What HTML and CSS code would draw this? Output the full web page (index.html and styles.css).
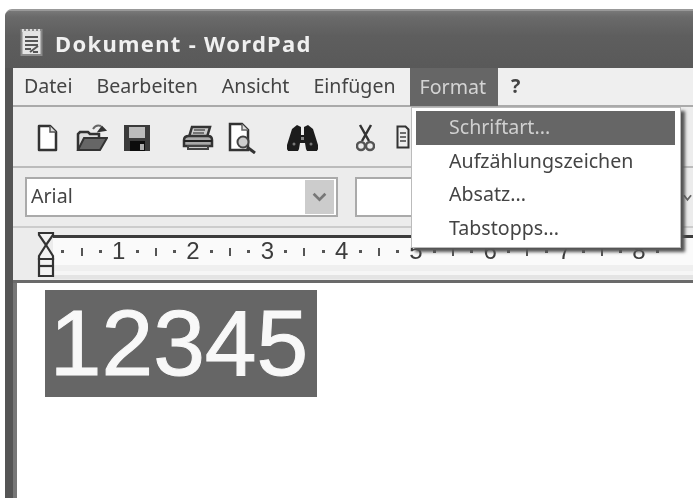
FILE: index.html
```html
<!DOCTYPE html>
<html lang="de">
<head>
<meta charset="utf-8">
<title>Dokument - WordPad</title>
<link rel="stylesheet" href="styles.css">
</head>
<body>
<div class="window">
  <header class="titlebar">
    <svg class="appicon" viewBox="0 0 23 28"><rect x="1.500" y="2" width="20" height="25" fill="#e4e4e4" stroke="#8a8a8a" stroke-width="2"/><path d="M3 1v3M7 1v3M11 1v3M15 1v3M19 1v3" stroke="#ddd" stroke-width="2"/><path d="M5 9h13M5 13h13M5 17h13M5 21h6" stroke="#555" stroke-width="2"/><path d="M10 24l8-6M13 24h5" stroke="#555" stroke-width="2" fill="none"/></svg>
    <span class="apptitle">Dokument - WordPad</span>
  </header>
  <div class="client">
    <nav class="menubar">
      <span class="menu">Datei</span>
      <span class="menu">Bearbeiten</span>
      <span class="menu">Ansicht</span>
      <span class="menu">Einfügen</span>
      <span class="menu active">Format</span>
      <span class="menu help">?</span>
    </nav>
    <div class="toolbar">
      <svg class="ti new" viewBox="0 0 21 28"><path d="M2 2h11l6 6v18H2z" fill="#fff" stroke="#333" stroke-width="2.500" stroke-linejoin="round"/><path d="M13 2v6h6" fill="#ddd" stroke="#555" stroke-width="1.500"/></svg>
      <svg class="ti open" viewBox="0 0 32 29"><path d="M2 27V11l2-2h8l2 2h9v4" fill="#ddd" stroke="#333" stroke-width="2.500"/><path d="M2 27l6-12h23l-7 12z" fill="#666" stroke="#333" stroke-width="2"/><path d="M17 6q3-5 8-3" fill="none" stroke="#666" stroke-width="2"/><path d="M23 8l3-4 3 3z" fill="#333" stroke="#333" stroke-width="2"/></svg>
      <svg class="ti save" viewBox="0 0 28 28"><path d="M1 1h26v26H1z" fill="#3a3a3a"/><rect x="6" y="3" width="16" height="11" fill="#bbb"/><rect x="7" y="17" width="15" height="10" fill="#0c0c0c"/><rect x="17" y="20" width="4" height="6" fill="#aaa"/></svg>
      <svg class="ti print" viewBox="0 0 32 26"><path d="M10 2h18l-3 10H7z" fill="#ccc" stroke="#333" stroke-width="2.500"/><path d="M12 5h11M11 8h11" stroke="#555" stroke-width="1.500"/><path d="M2 15q0-4 5-4h19q4 0 4 4v6H2z" fill="#aaa" stroke="#333" stroke-width="2.500"/><path d="M2 16h28" stroke="#222" stroke-width="2"/><path d="M6 21h20v3H6z" fill="#ccc" stroke="#444" stroke-width="2"/></svg>
      <svg class="ti preview" viewBox="0 0 30 32"><path d="M2 2h12l6 6v20H2z" fill="#fff" stroke="#333" stroke-width="2.500"/><path d="M14 2v6h6" fill="#ddd" stroke="#666" stroke-width="1.500"/><circle cx="15" cy="20" r="5.500" fill="#ccc" stroke="#444" stroke-width="2"/><path d="M19 25l8 6" stroke="#333" stroke-width="3"/></svg>
      <svg class="ti find" viewBox="0 0 31 27"><path d="M5 5l5-4 4 2v8h3V3l4-2 5 4 5 16a6 6 0 0 1-12 4l-1-6h-5l-1 6a6 6 0 0 1-12-4z" fill="#1c1c1c"/><circle cx="7" cy="20" r="1.500" fill="#777"/><circle cx="24" cy="20" r="1.500" fill="#777"/><rect x="14" y="13" width="3" height="3" fill="#888"/></svg>
      <svg class="ti cut" viewBox="0 0 19 28"><path d="M4 1l9 16M15 1L6 17" stroke="#333" stroke-width="2.500" fill="none"/><circle cx="5" cy="22" r="4" fill="none" stroke="#555" stroke-width="2.500"/><circle cx="14" cy="22" r="4" fill="none" stroke="#555" stroke-width="2.500"/></svg>
      <svg class="ti copy" viewBox="0 0 14 26"><path d="M1.500 1.500h8l3 3v18h-11z" fill="#eee" stroke="#333" stroke-width="2"/><path d="M4 8h6M4 12h6M4 16h6" stroke="#444" stroke-width="1.500"/></svg>
    </div>
    <div class="formatbar">
      <div class="combo">
        <span class="combotext">Arial</span>
        <span class="dropbtn"><svg viewBox="0 0 14 9" class="chev"><path d="M1.500 1.500L7 7l5.500-5.500" fill="none" stroke="#777" stroke-width="2.500"/></svg></span>
      </div>
      <div class="combo small"></div>
      <svg class="far-chev" viewBox="0 0 10 10"><path d="M1 2l4 5 4-5" fill="none" stroke="#666" stroke-width="2"/></svg>
    </div>
    <div class="ruler">
      <svg class="marker" viewBox="0 0 18 47"><path d="M2 2h14v2L9 14 2 4z" fill="#f2f2f2" stroke="#333" stroke-width="2.200"/><path d="M9 14l7 11v3H2v-3z" fill="#f2f2f2" stroke="#333" stroke-width="2.200"/><path d="M2 28h14v17H2z" fill="#f2f2f2" stroke="#333" stroke-width="2.200"/><path d="M2 35h14" stroke="#333" stroke-width="2.200"/></svg>
      <div class="rulerbody">
        <div class="scale">
          <i class="dot"></i><i class="bar"></i><i class="dot"></i><span class="num">1</span>
          <i class="dot"></i><i class="bar"></i><i class="dot"></i><span class="num">2</span>
          <i class="dot"></i><i class="bar"></i><i class="dot"></i><span class="num">3</span>
          <i class="dot"></i><i class="bar"></i><i class="dot"></i><span class="num">4</span>
          <i class="dot"></i><i class="bar"></i><i class="dot"></i><span class="num">5</span>
          <i class="dot"></i><i class="bar"></i><i class="dot"></i><span class="num">6</span>
          <i class="dot"></i><i class="bar"></i><i class="dot"></i><span class="num">7</span>
          <i class="dot"></i><i class="bar"></i><i class="dot"></i><span class="num">8</span>
          <i class="dot"></i>
        </div>
        <div class="tabline"></div>
      </div>
    </div>
    <main class="doc">
      <span class="selection">12345</span>
    </main>
    <ul class="dropdown">
      <li class="item selected">Schriftart...</li>
      <li class="item">Aufzählungszeichen</li>
      <li class="item">Absatz...</li>
      <li class="item">Tabstopps...</li>
    </ul>
  </div>
</div>
</body>
</html>
```
FILE: styles.css
```css
* { box-sizing: border-box; }
html, body { margin: 0; height: 100%; background: #fff; overflow: hidden; }
body { font-family: "Noto Sans", "Liberation Sans", sans-serif; color: #444; }
.window { height: 489px; margin: 9px 0 0 5px; background: #555; border-radius: 7px 0 0 0; padding-left: 8px; display: flex; flex-direction: column; position: relative; border-top: 2px solid #999; filter: blur(0.55px); }
.titlebar { height: 57px; margin-left: -8px; padding: 6px 0 0 15px; display: flex; align-items: center; gap: 12px; border-radius: 6px 0 0 0; background: linear-gradient(#787878 0, #6a6a6a 6px, #5e5e5e 25px, #595959 100%); }
.appicon { width: 23px; height: 28px; flex: none; margin-bottom: 2px; }
.apptitle { font-weight: bold; font-size: 22px; letter-spacing: 1.300px; color: #f0f0f0; }
.client { flex: 1; background: #eee; position: relative; display: flex; flex-direction: column; }
.menubar { height: 39px; display: flex; align-items: stretch; gap: 24px; padding-left: 11px; font-size: 19.600px; border-bottom: 2px solid #aaa; background: #efefef; }
.menu { display: flex; align-items: center; padding-bottom: 2px; }
.active { background: #666; color: #d4d4d4; padding: 0 12px 2px 10px; margin-left: -10px; height: 38px; }
.help { margin-left: -11px; font-weight: bold; }
.toolbar { height: 61px; display: flex; align-items: center; padding: 2px 0 0 24px; border-bottom: 2px solid #bbb; background: #ededed; }
.ti { flex: none; display: block; }
.new { width: 21px; height: 28px; }
.open { width: 32px; height: 29px; margin-left: 18px; }
.save { width: 28px; height: 28px; margin-left: 15px; }
.print { width: 32px; height: 26px; margin-left: 31px; }
.preview { width: 30px; height: 32px; margin-left: 14px; }
.find { width: 31px; height: 27px; margin-left: 29px; }
.cut { width: 19px; height: 28px; margin-left: 38px; }
.copy { width: 14px; height: 26px; margin-left: 21px; }
.formatbar { height: 60px; display: flex; align-items: center; padding-left: 12px; border-bottom: 2px solid #ccc; background: #ececec; position: relative; }
.combo { width: 313px; height: 40px; border: 2px solid #aaa; background: #fff; display: flex; justify-content: space-between; align-items: stretch; }
.combotext { font-size: 19.600px; line-height: 34px; padding-left: 4px; }
.dropbtn { width: 29px; margin: 1px 2px 1px 0; background: #ccc; display: flex; align-items: center; justify-content: center; }
.chev { width: 15px; height: 10px; }
.small { width: 75px; margin-left: 17px; }
.far-chev { position: absolute; right: 1px; top: 24px; width: 9px; height: 12px; }
.ruler { height: 55px; display: flex; align-items: flex-start; padding-left: 24px; border-bottom: 3px solid #6a6a6a; background: #ececec; position: relative; }
.marker { width: 18px; height: 47px; margin: 3px -2px 0 0; position: relative; z-index: 1; flex: none; }
.rulerbody { flex: 1; margin-top: 7px; display: flex; flex-direction: column; }
.scale { height: 30px; background: #fafafa; border-top: 3px solid #3c3c3c; display: grid; grid-auto-flow: column; grid-auto-columns: 18.580px; align-items: center; justify-items: center; padding-left: 0.700px; overflow: hidden; }
.dot { width: 3px; height: 3px; background: #555; }
.bar { width: 2px; height: 8px; background: #555; }
.num { font-family: "Liberation Sans", sans-serif; font-size: 24px; line-height: 24px; color: #3c3c3c; margin-top: -2px; }
.tabline { height: 14px; border-top: 6px solid #efefef; border-bottom: 4px solid #e4e4e4; background: #f6f6f6; }
.doc { flex: 1; background: #fff; border-left: 4px solid #777; padding: 7px 0 0 28px; }
.selection { display: block; width: 272px; height: 107px; padding-right: 4px; background: #666; color: #f8f8f8; font-family: "Liberation Sans", sans-serif; font-size: 93px; line-height: 107px; text-align: center; -webkit-text-stroke: 1px #f8f8f8; }
.dropdown { list-style: none; margin: 0; padding: 3px 5px 0 4px; position: absolute; left: 398px; top: 39px; width: 270px; height: 141px; background: #fff; border: 1px solid #bbb; box-shadow: 4px 4px 3px #555; font-size: 19.600px; }
.item { height: 33.500px; line-height: 31px; padding-left: 33px; }
.selected { background: #666; color: #d0d0d0; }
```
